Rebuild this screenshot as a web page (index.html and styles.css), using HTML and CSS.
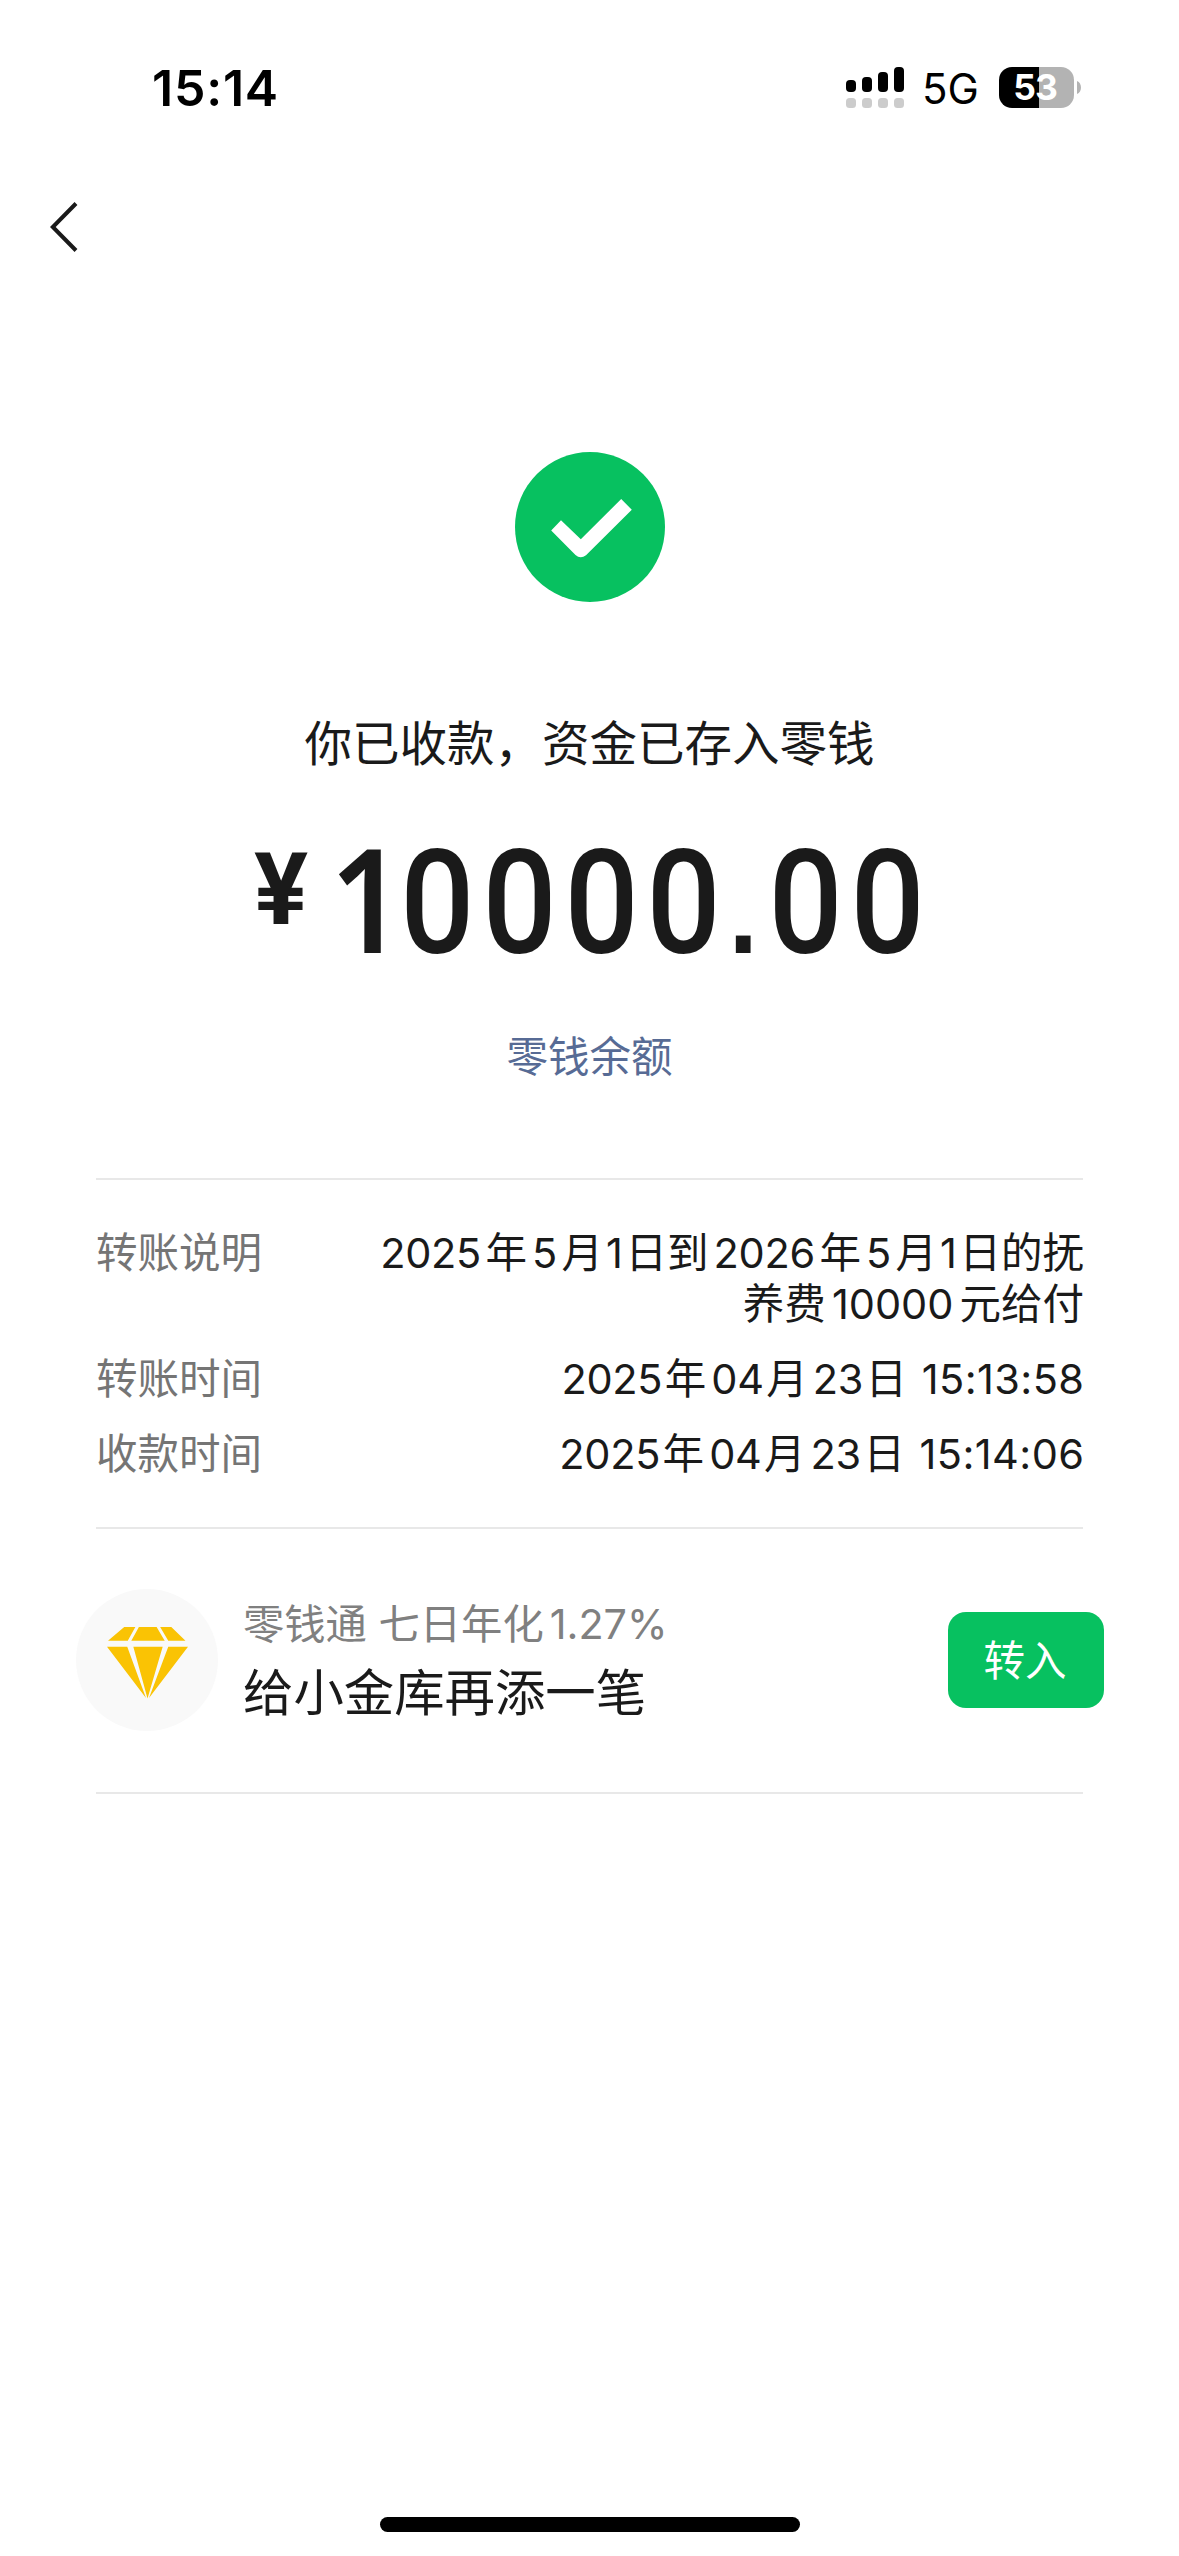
FILE: index.html
```
<!DOCTYPE html>
<html lang="zh-CN">
<head>
<meta charset="utf-8">
<title>零钱余额</title>
<link rel="stylesheet" href="styles.css">
</head>
<body>
<header class="status">
  <span class="clock">15:14</span>
  <div class="status-right">
    <svg class="signal" width="58" height="41" viewBox="0 0 58 41">
      <g fill="#000"><rect x="0" y="13" width="10" height="12" rx="4"/><rect x="16" y="10" width="10" height="15" rx="4"/><rect x="32" y="5" width="10" height="20" rx="4"/><rect x="48" y="0" width="10" height="25" rx="4"/></g>
      <g fill="#ccc"><rect x="0" y="31" width="10" height="10" rx="3.5"/><rect x="16" y="31" width="10" height="10" rx="3.5"/><rect x="32" y="31" width="10" height="10" rx="3.5"/><rect x="48" y="31" width="10" height="10" rx="3.5"/></g>
    </svg>
    <span class="network">5G</span>
    <div class="battery"><span class="level">53</span></div>
    <svg class="nub" width="4" height="13" viewBox="0 0 4 13"><path d="M0 0C5.300 2 5.300 11 0 13Z" fill="#b3b3b3"/></svg>
  </div>
</header>
<nav class="nav">
  <svg width="28" height="52" viewBox="0 0 28 52"><path d="M26 2.500 2.800 26 26 49.500" fill="none" stroke="#1a1a1a" stroke-width="4"/></svg>
</nav>
<main>
  <section class="result">
    <svg width="150" height="150" viewBox="0 0 150 150">
      <circle cx="75" cy="75" r="75" fill="#07c160"/>
      <path d="M36.200 78.500 46 68.300 65.800 87.300 106.200 47 116.800 57.700 71 103.200Q65.500 107.500 60.500 103Z" fill="#fff"/>
    </svg>
    <p class="message">你已收款，资金已存入零钱</p>
    <p class="amount"><span class="yen">¥</span><span class="digits"><span class="lead">1</span>0000<span class="point">.</span>00</span></p>
    <a class="link">零钱余额</a>
  </section>
  <dl class="details">
    <div class="row"><dt>转账说明</dt><dd><span class="n">2025</span>年<span class="n">5</span>月<span class="n one">1</span>日到<span class="n">2026</span>年<span class="n">5</span>月<span class="n one">1</span>日的抚<br>养费<span class="n sum">10000</span>元给付</dd></div>
    <div class="row date"><dt>转账时间</dt><dd><span class="n">2025</span>年<span class="n">04</span>月<span class="n">23</span>日 <span class="t">15:13:58</span></dd></div>
    <div class="row date"><dt>收款时间</dt><dd><span class="n">2025</span>年<span class="n">04</span>月<span class="n">23</span>日 <span class="t">15:14:06</span></dd></div>
  </dl>
  <section class="promo">
    <div class="gem">
      <svg width="81" height="73" viewBox="0 0 80 72" fill="#fac304">
        <path d="M17 0H28L20.500 13.500H1Z M31.500 0H49L57 13.500H24Z M52.500 0H63.500L77.500 13.500H60.500Z"/>
        <path d="M0 19.500H20L38.500 70Z M26 19.500H55L40 70.500Z M60.500 19.500H80L41.500 70Z"/>
      </svg>
    </div>
    <div class="promo-text">
      <p class="rate">零钱通 七日年化<span class="p">1.27%</span></p>
      <p class="pitch">给小金库再添一笔</p>
    </div>
    <button class="transfer">转入</button>
  </section>
</main>
<footer class="home"></footer>
</body>
</html>
```
FILE: styles.css
```
* { box-sizing: border-box; }
body {
  margin: 0;
  width: 1179px;
  height: 2556px;
  display: flex;
  flex-direction: column;
  background: #fff;
  color: #1a1a1a;
  font-family: Inter, "Noto Sans CJK SC", sans-serif;
  font-size: 41.5px;
}
p, dl, dd { margin: 0; }
.status {
  height: 177px;
  padding: 58px 98px 0 152px;
  display: flex;
  align-items: flex-start;
  justify-content: space-between;
  color: #000;
}
.clock { font-size: 50px; font-weight: 600; line-height: 60px; letter-spacing: 0.8px; }
.status-right { display: flex; align-items: center; height: 59px; }
.signal { margin-right: 18px; }
.network { width: 77px; font-size: 42px; line-height: 59px; padding-top: 2px; }
.battery {
  width: 75px;
  height: 41px;
  padding-right: 3px;
  border-radius: 13px;
  background: linear-gradient(90deg, #000 40px, #b3b3b3 40px);
  color: #fff;
  text-align: center;
}
.level { display: block; font-size: 35.5px; font-weight: 700; line-height: 42px; letter-spacing: -1px; }
.nub { margin-left: 3px; }
.nav { height: 275px; padding: 24px 50px; }
.result {
  height: 726px;
  display: flex;
  flex-direction: column;
  align-items: center;
}
.message { margin-top: 107px; font-size: 47.5px; line-height: 70px; }
.amount {
  width: 100%;
  margin-top: 52px;
  padding-left: 254px;
  height: 144px;
  display: flex;
  align-items: flex-start;
  font-family: Roboto, sans-serif;
}
.yen { width: 64px; font-size: 101px; font-weight: 700; line-height: 118px; }
.digits {
  font-size: 145px;
  font-weight: 500;
  line-height: 144px;
  letter-spacing: 8.8px;
  transform: scaleX(0.9);
  transform-origin: left;
}
.lead {
  margin-left: 13px;
  font-family: "Noto Sans", sans-serif;
  font-weight: 600;
  line-height: 0;
  letter-spacing: -4.5px;
}
.point { font: 700 116px/0 "Liberation Sans", sans-serif; letter-spacing: 12px; }
.link { margin-top: 56px; line-height: 52px; color: #576b95; }
.details {
  margin: 0 96px;
  height: 351px;
  padding-top: 48px;
  border-top: 2px solid #e8e8e8;
  border-bottom: 2px solid #e8e8e8;
  display: flex;
  flex-direction: column;
  gap: 24px;
}
.row { display: flex; justify-content: space-between; line-height: 51px; white-space: nowrap; }
.row dt { color: #757575; }
.row dd { margin-right: -1px; text-align: right; }
.n { margin: 0 4.5px 0 5px; letter-spacing: -0.3px; }
.n.one { margin: 0 3px; }
.n.sum { margin: 0 6px; letter-spacing: 0; }
.date { word-spacing: 3px; }
.date .n { margin: 0 2.5px 0 5px; }
.t { letter-spacing: 0.4px; margin-right: -0.4px; }
.promo {
  margin: 0 96px;
  height: 265px;
  padding-bottom: 2px;
  border-bottom: 2px solid #e8e8e8;
  display: flex;
  align-items: center;
}
.gem {
  width: 142px;
  height: 142px;
  margin-left: -20px;
  padding-top: 7px;
  border-radius: 50%;
  background: #f9f9f9;
  display: grid;
  place-items: center;
}
.promo-text { flex: 1; padding: 5px 0 0 25px; }
.rate { font-size: 41.3px; color: #808080; line-height: 60px; }
.p { margin-left: 6px; }
.pitch { font-size: 50.4px; line-height: 77px; }
.transfer {
  width: 156px;
  height: 96px;
  margin-right: -21px;
  padding: 0 2px 3px 0;
  border: 0;
  border-radius: 18px;
  background: #07c160;
  color: #fff;
  font: inherit;
}
.home {
  width: 420px;
  height: 15px;
  margin: auto auto 24px;
  border-radius: 8px;
  background: #000;
}
```
